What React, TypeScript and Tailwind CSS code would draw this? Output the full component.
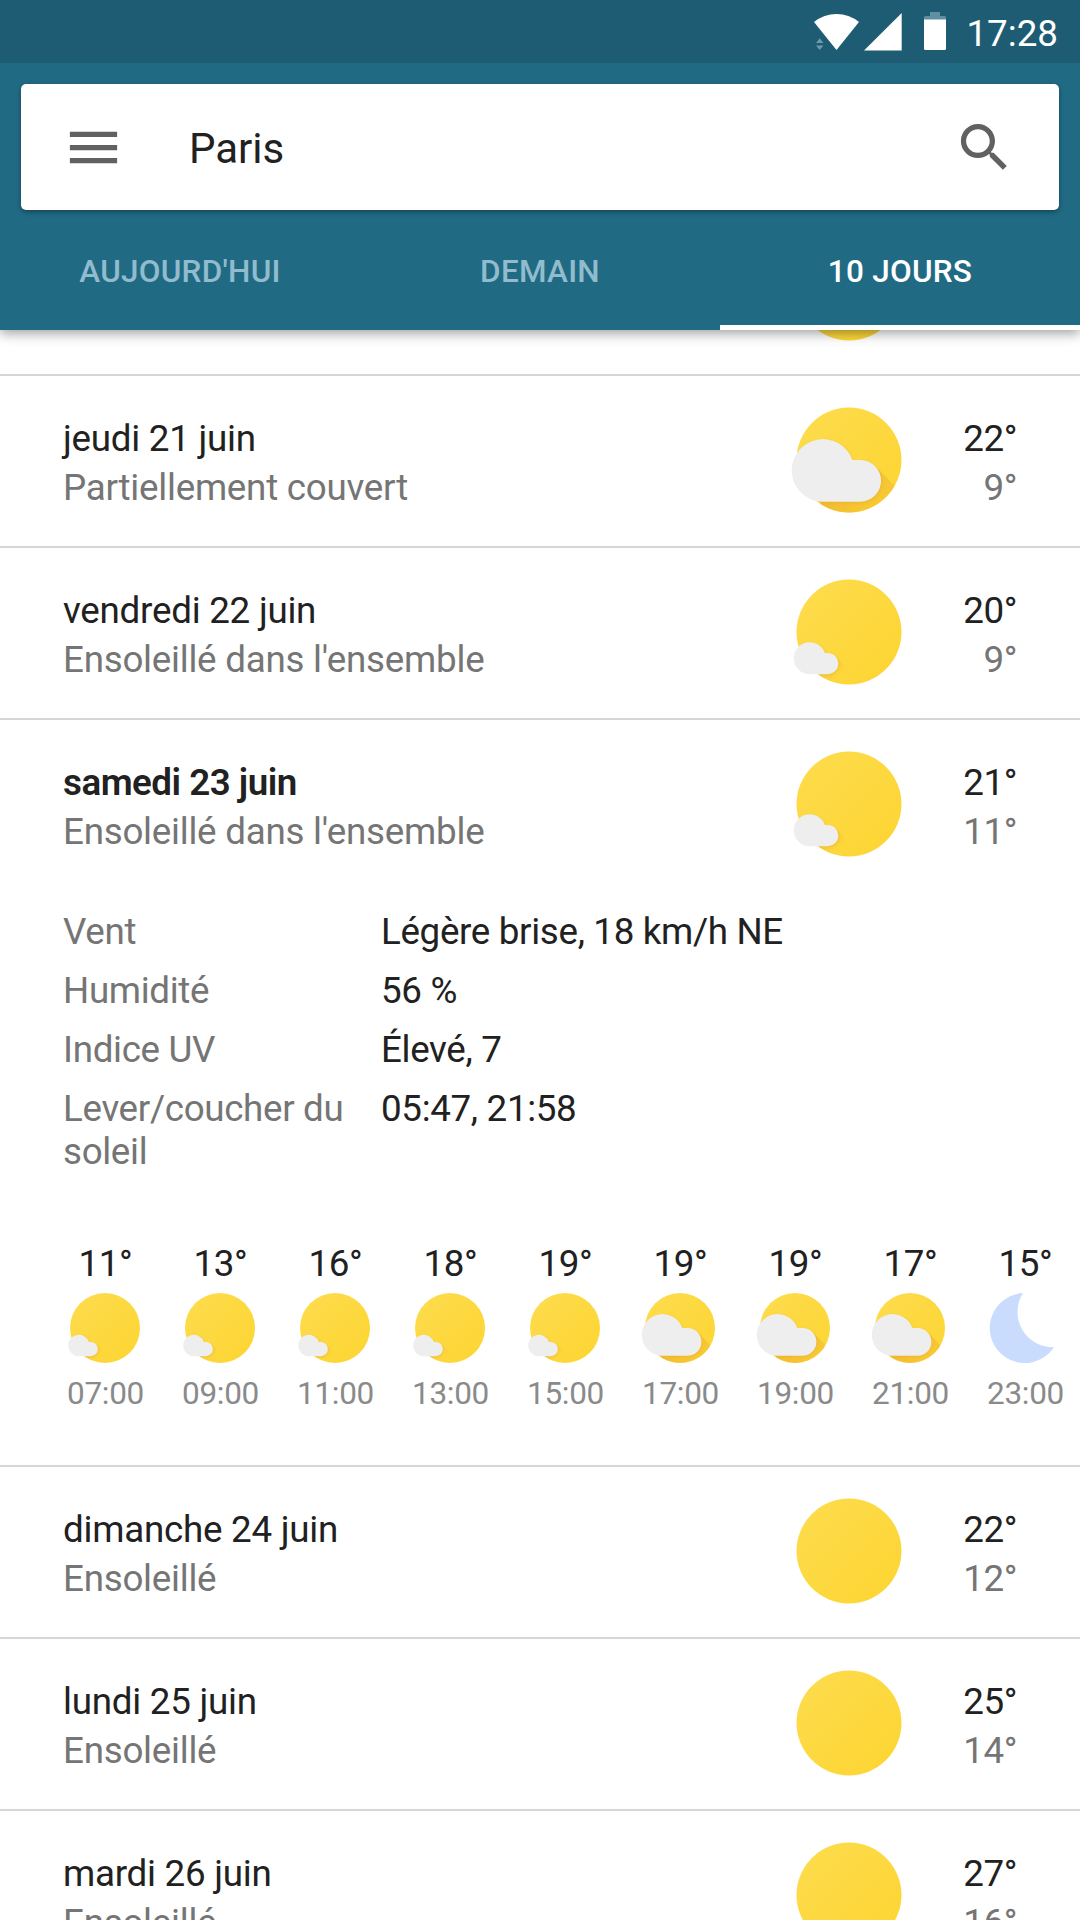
import React, { useId } from "react";

type Sky = "sunny" | "mostly" | "partly" | "night";

const BIG_CLOUD =
  "M34 101.7 A31.3 31.3 0 1 1 63.5 60 H71.2 A20.85 20.85 0 0 1 71.2 101.7 Z";
const SMALL_CLOUD =
  "M20.8 102.2 A16 16 0 1 1 35.9 81 H38.8 A10.6 10.6 0 0 1 38.8 102.2 Z";

function SkyIcon({ sky, className }: { sky: Sky; className: string }) {
  const id = useId().replace(/[^a-zA-Z0-9]/g, "");
  if (sky === "night") {
    return (
      <svg viewBox="0 0 120 120" className={className}>
        <path
          d="M57 7.6 A52.5 52.5 0 1 0 103.5 89 A53 53 0 0 1 57 7.6 Z"
          fill="#c9dcfd"
        />
      </svg>
    );
  }
  return (
    <svg viewBox="0 0 120 120" className={className}>
      <defs>
        <linearGradient id={`s${id}`} x1="0" y1="0" x2="1" y2="1">
          <stop offset="0" stopColor="#fddc4e" />
          <stop offset="1" stopColor="#fdd531" />
        </linearGradient>
        <linearGradient
          id={`g${id}`}
          gradientUnits="userSpaceOnUse"
          x1={sky === "partly" ? 62 : 34}
          y1={sky === "partly" ? 72 : 86}
          x2={sky === "partly" ? 98 : 52}
          y2={sky === "partly" ? 108 : 104}
        >
          <stop offset="0" stopColor="#f0b62f" stopOpacity="0.9" />
          <stop offset="1" stopColor="#f8c634" stopOpacity={sky === "partly" ? 0.7 : 0} />
        </linearGradient>
        <clipPath id={`c${id}`}>
          <circle cx="60" cy="60" r="52.5" />
        </clipPath>
        <filter id={`b${id}`} x="-20%" y="-20%" width="140%" height="140%">
          <feGaussianBlur stdDeviation="1.6" />
        </filter>
      </defs>
      <circle cx="60" cy="60" r="52.5" fill={`url(#s${id})`} />
      {sky === "partly" && (
        <g clipPath={`url(#c${id})`}>
          <path d="M86 66 L122 102 V122 H30 L32 100 Z" fill={`url(#g${id})`} />
          <path d={BIG_CLOUD} fill="#c98a1c" opacity="0.2" transform="translate(0.7 1)" filter={`url(#b${id})`} />
        </g>
      )}
      {sky === "mostly" && (
        <g clipPath={`url(#c${id})`}>
          <path d="M46.3 84 L70 108 V122 H36 L22 102 Z" fill={`url(#g${id})`} />
          <path d={SMALL_CLOUD} fill="#c98a1c" opacity="0.2" transform="translate(0.7 1)" filter={`url(#b${id})`} />
        </g>
      )}
      {sky !== "sunny" && (
        <path d={sky === "partly" ? BIG_CLOUD : SMALL_CLOUD} fill="#eeeeee" />
      )}
    </svg>
  );
}

function StatusBar() {
  return (
    <div className="flex h-[63px] items-start justify-end bg-[#1d5c72] pr-[22px] text-white">
      <svg viewBox="814 0 134 63" className="mr-[18px] h-[63px] w-[134px]">
        <path d="M836.5 50 L814 22 Q824 14 836.5 14 Q849 14 859 22 Z" fill="#fff" />
        <path d="M816 43 L819.7 38.3 L823.4 43 Z M816 45.4 H823.4 L819.7 50 Z" fill="#6d9bab" />
        <path d="M864 50.5 L901.7 13 V50.5 Z" fill="#fff" />
        <path d="M930 12 H940 V16 H944.5 Q946 16 946 17.5 V20 H924 V17.5 Q924 16 925.5 16 H930 Z" fill="#5f90a2" />
        <path d="M924 19.5 H946 V48.5 Q946 50 944.5 50 H925.5 Q924 50 924 48.5 Z" fill="#fff" />
      </svg>
      <span className="mt-[12px] text-[36.75px] leading-[43px]">17:28</span>
    </div>
  );
}

function SearchCard() {
  return (
    <div className="mx-[21px] mt-[21px] flex h-[126px] items-center rounded-[5px] bg-white shadow-[0_2px_5px_rgba(0,0,0,0.35)]">
      <svg viewBox="0 0 24 24" className="ml-[41px] size-[63px] shrink-0 fill-[#616161]">
        <path d="M3 18h18v-2H3v2zm0-5h18v-2H3v2zm0-7v2h18V6H3z" />
      </svg>
      <span className="ml-[64px] flex-1 pt-[2px] text-[42px] leading-[49px] text-[#212121]">Paris</span>
      <svg viewBox="0 0 24 24" className="mr-[43px] size-[63px] shrink-0 fill-[#616161]">
        <path d="M15.5 14h-.79l-.28-.27C15.41 12.59 16 11.11 16 9.5 16 5.91 13.09 3 9.5 3S3 5.91 3 9.5 5.91 16 9.5 16c1.61 0 3.09-.59 4.23-1.57l.27.28v.79l5 4.99L20.49 19l-4.99-5zm-6 0C7.01 14 5 11.99 5 9.5S7.01 5 9.5 5 14 7.01 14 9.5 11.99 14 9.5 14z" />
      </svg>
    </div>
  );
}

function Tab({ label, active }: { label: string; active?: boolean }) {
  return (
    <div
      className={
        active
          ? "flex flex-1 justify-center border-b-[5px] border-white pt-[43px] text-white"
          : "flex flex-1 justify-center pt-[43px] text-[#90bccd]"
      }
    >
      <span className="text-[31.5px] leading-[37px] font-medium tracking-[0.25px]">{label}</span>
    </div>
  );
}

type Day = { name: string; text: string; sky: Sky; hi: string; lo: string };

function DayRow({ day, bold }: { day: Day; bold?: boolean }) {
  return (
    <div className="flex h-[170px] shrink-0 px-[63px] text-[36.75px] leading-[43px] tracking-[-0.25px]">
      <div className="flex flex-1 flex-col gap-[6px] pt-[41px]">
        <span className={bold ? "font-semibold tracking-[-0.5px] text-[#212121]" : "text-[#212121]"}>{day.name}</span>
        <span className="text-[#757575]">{day.text}</span>
      </div>
      <SkyIcon sky={day.sky} className="mt-[24px] size-[120px]" />
      <div className="flex w-[108px] flex-col gap-[6px] pt-[41px] text-right tracking-[-0.4px]">
        <span className="text-[#212121]">{day.hi}</span>
        <span className="text-[#757575]">{day.lo}</span>
      </div>
    </div>
  );
}

const before: Day[] = [
  { name: "jeudi 21 juin", text: "Partiellement couvert", sky: "partly", hi: "22°", lo: "9°" },
  { name: "vendredi 22 juin", text: "Ensoleillé dans l'ensemble", sky: "mostly", hi: "20°", lo: "9°" },
];
const selected: Day = {
  name: "samedi 23 juin",
  text: "Ensoleillé dans l'ensemble",
  sky: "mostly",
  hi: "21°",
  lo: "11°",
};
const after: Day[] = [
  { name: "dimanche 24 juin", text: "Ensoleillé", sky: "sunny", hi: "22°", lo: "12°" },
  { name: "lundi 25 juin", text: "Ensoleillé", sky: "sunny", hi: "25°", lo: "14°" },
  { name: "mardi 26 juin", text: "Ensoleillé", sky: "sunny", hi: "27°", lo: "16°" },
];
const details = [
  ["Vent", "Légère brise, 18 km/h NE"],
  ["Humidité", "56 %"],
  ["Indice UV", "Élevé, 7"],
  ["Lever/coucher du soleil", "05:47, 21:58"],
];
const hours: { temp: string; sky: Sky; time: string }[] = [
  { temp: "11°", sky: "mostly", time: "07:00" },
  { temp: "13°", sky: "mostly", time: "09:00" },
  { temp: "16°", sky: "mostly", time: "11:00" },
  { temp: "18°", sky: "mostly", time: "13:00" },
  { temp: "19°", sky: "mostly", time: "15:00" },
  { temp: "19°", sky: "partly", time: "17:00" },
  { temp: "19°", sky: "partly", time: "19:00" },
  { temp: "17°", sky: "partly", time: "21:00" },
  { temp: "15°", sky: "night", time: "23:00" },
];

export default function App() {
  return (
    <div className="flex h-[1920px] w-[1080px] flex-col overflow-hidden bg-white font-['Roboto',sans-serif]">
      <header className="relative z-10 flex h-[330px] shrink-0 flex-col bg-[#216a84] shadow-[0_3px_12px_rgba(0,0,0,0.4)]">
        <StatusBar />
        <SearchCard />
        <nav className="flex flex-1">
          <Tab label="AUJOURD'HUI" />
          <Tab label="DEMAIN" />
          <Tab label="10 JOURS" active />
        </nav>
      </header>
      <main className="flex min-h-0 flex-1 flex-col overflow-hidden">
        <div className="flex h-[46px] shrink-0 items-end justify-end overflow-hidden border-b-2 border-[#d6d6d6] pr-[171px] pb-[26px]">
          <SkyIcon sky="sunny" className="size-[120px] shrink-0" />
        </div>
        {before.map((d) => (
          <div key={d.name} className="shrink-0 border-b-2 border-[#d6d6d6]">
            <DayRow day={d} />
          </div>
        ))}
        <section className="h-[747px] shrink-0 border-b-2 border-[#d6d6d6]">
          <DayRow day={selected} bold />
          <dl className="mt-[20px] flex flex-col gap-[16px] pl-[63px] text-[36.75px] leading-[43px] tracking-[-0.33px]">
            {details.map(([k, v]) => (
              <div key={k} className="flex">
                <dt className="w-[318px] pr-[30px] text-[#757575]">{k}</dt>
                <dd className="text-[#212121]">{v}</dd>
              </div>
            ))}
          </dl>
          <div className="mt-[69px] flex pl-[48px]">
            {hours.map((h) => (
              <div key={h.time} className="flex w-[115px] shrink-0 flex-col items-center">
                <span className="text-[36.75px] leading-[43px] tracking-[-0.4px] text-[#212121]">{h.temp}</span>
                <SkyIcon sky={h.sky} className="mt-[3px] mr-[2px] size-[80px]" />
                <span className="mt-[7px] text-[31.5px] leading-[37px] tracking-[-0.3px] text-[#8a8a8a]">{h.time}</span>
              </div>
            ))}
          </div>
        </section>
        {after.map((d) => (
          <div key={d.name} className="shrink-0 border-b-2 border-[#d6d6d6]">
            <DayRow day={d} />
          </div>
        ))}
      </main>
    </div>
  );
}
